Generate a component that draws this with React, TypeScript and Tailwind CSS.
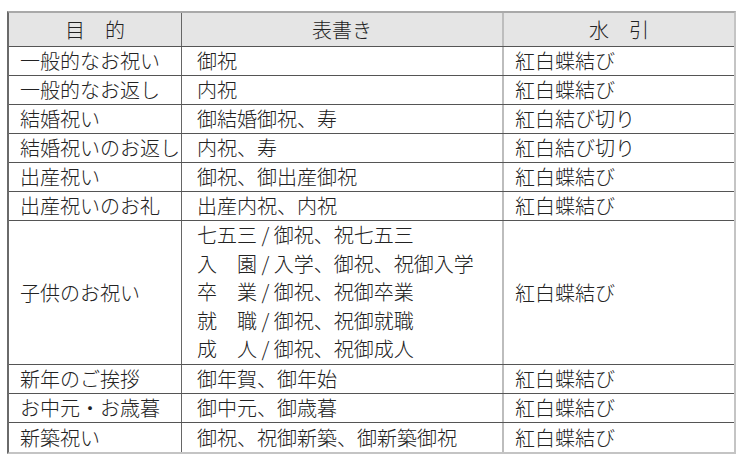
import React from "react";

// 用途ごとの表書き・水引の一覧
type Row = {
  purpose: string;
  lines: string[];
  mizuhiki: string;
};

const rows: Row[] = [
  { purpose: "一般的なお祝い", lines: ["御祝"], mizuhiki: "紅白蝶結び" },
  { purpose: "一般的なお返し", lines: ["内祝"], mizuhiki: "紅白蝶結び" },
  { purpose: "結婚祝い", lines: ["御結婚御祝、寿"], mizuhiki: "紅白結び切り" },
  { purpose: "結婚祝いのお返し", lines: ["内祝、寿"], mizuhiki: "紅白結び切り" },
  { purpose: "出産祝い", lines: ["御祝、御出産御祝"], mizuhiki: "紅白蝶結び" },
  { purpose: "出産祝いのお礼", lines: ["出産内祝、内祝"], mizuhiki: "紅白蝶結び" },
  {
    purpose: "子供のお祝い",
    lines: [
      "七五三 / 御祝、祝七五三",
      "入　園 / 入学、御祝、祝御入学",
      "卒　業 / 御祝、祝御卒業",
      "就　職 / 御祝、祝御就職",
      "成　人 / 御祝、祝御成人",
    ],
    mizuhiki: "紅白蝶結び",
  },
  { purpose: "新年のご挨拶", lines: ["御年賀、御年始"], mizuhiki: "紅白蝶結び" },
  { purpose: "お中元・お歳暮", lines: ["御中元、御歳暮"], mizuhiki: "紅白蝶結び" },
  { purpose: "新築祝い", lines: ["御祝、祝御新築、御新築御祝"], mizuhiki: "紅白蝶結び" },
];

export default function App() {
  return (
    <div
      className="w-[740px] h-[457px] bg-white pt-[11px] pl-[7px] text-[20px] font-light text-[#222]"
      style={{ fontFamily: '"Noto Sans CJK JP", "Noto Sans", sans-serif' }}
    >
      <div className="w-[729px] border-t-2 border-r-2 border-b-2 border-l-2 border-t-[#a9a9a9] border-r-[#c4c4c4] border-b-[#c4c4c4] border-l-[#6a6a6a]">
        {/* Header */}
        <div className="grid grid-cols-[173px_322px_230px] h-[34px] bg-[#e5e5e5] border-b border-[#555]">
          <div className="flex items-center justify-center border-r border-[#666] leading-none">
            目　的
          </div>
          <div className="flex items-center justify-center border-r-2 border-[#bdbdbd] leading-none">
            表書き
          </div>
          <div className="flex items-center justify-center leading-none">水　引</div>
        </div>

        {rows.map((row, i) => {
          const last = i === rows.length - 1;
          const tall = row.lines.length > 1;
          return (
            <div
              key={row.purpose}
              className={`grid grid-cols-[173px_322px_230px] ${
                tall ? "h-[144px]" : "h-[29px]"
              } ${last ? "" : "border-b border-[#555]"}`}
            >
              <div className="flex items-center pl-[11px] border-r border-[#666] whitespace-nowrap leading-none">
                {row.purpose}
              </div>
              <div className="flex flex-col justify-center pl-[15px] border-r-2 border-[#bdbdbd] whitespace-nowrap">
                {row.lines.map((line) => (
                  <div key={line} className={tall ? "leading-[28.6px]" : "leading-none"}>
                    {line}
                  </div>
                ))}
              </div>
              <div className="flex items-center pl-[11px] whitespace-nowrap leading-none">
                {row.mizuhiki}
              </div>
            </div>
          );
        })}
      </div>
    </div>
  );
}
